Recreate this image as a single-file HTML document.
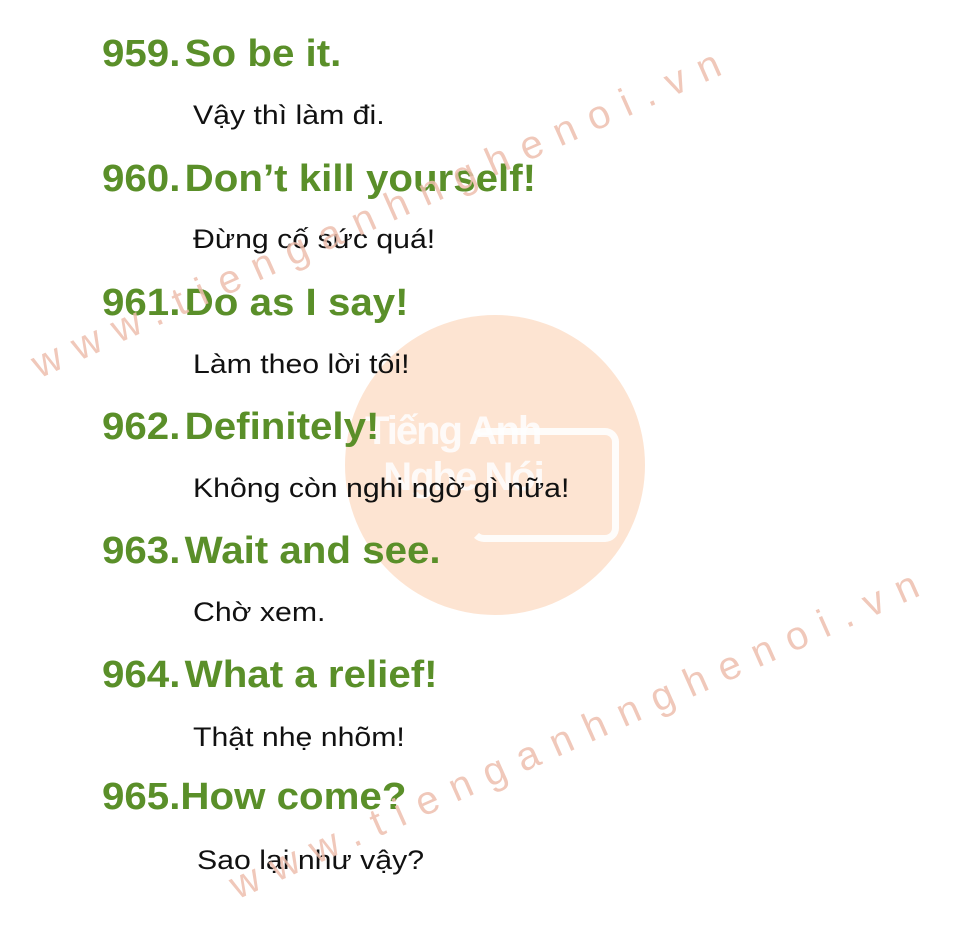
<!DOCTYPE html>
<html><head><meta charset="utf-8"><style>
html,body{margin:0;padding:0;background:#fff;width:960px;height:928px;overflow:hidden;position:relative;font-family:"Liberation Sans",Arial,sans-serif}
.c{position:absolute;left:345px;top:315px;width:300px;height:300px;border-radius:50%;background:#fde4d2}
.logo{position:absolute;left:365px;top:408px;color:#fff;font-weight:bold;font-size:40px;letter-spacing:-2px;opacity:.85;line-height:46px}
.bub{position:absolute;left:470px;top:428px;width:135px;height:100px;border:7px solid #fff;border-radius:14px;border-left-color:transparent;opacity:.9}
.h{position:absolute;left:102px;color:#5a8f29;font-weight:bold;font-size:38px;line-height:1;transform:scaleX(1.06);transform-origin:0 0;white-space:nowrap}
.h span{display:inline-block;width:78px}
.b{position:absolute;left:193px;color:#111;font-size:27px;line-height:1;transform:scaleX(1.12);transform-origin:0 0;white-space:nowrap}
.w{position:absolute;color:#eebfae;font-size:40px;letter-spacing:14.5px;white-space:nowrap;transform:rotate(-24deg);transform-origin:0 100%;line-height:1;opacity:.85}
</style></head><body>
<div class="c"></div>
<div class="bub"></div>
<div class="logo">Tiếng Anh<br>&nbsp;&nbsp;Nghe Nói</div>
<div class="h" style="top:35px"><span>959.</span>So be it.</div>
<div class="b" style="top:102px">Vậy thì làm đi.</div>
<div class="h" style="top:160px"><span>960.</span>Don’t kill yourself!</div>
<div class="b" style="top:226px">Đừng cố sức quá!</div>
<div class="h" style="top:284px"><span>961.</span>Do as I say!</div>
<div class="b" style="top:351px">Làm theo lời tôi!</div>
<div class="h" style="top:408px"><span>962.</span>Definitely!</div>
<div class="b" style="top:475px">Không còn nghi ngờ gì nữa!</div>
<div class="h" style="top:532px"><span>963.</span>Wait and see.</div>
<div class="b" style="top:599px">Chờ xem.</div>
<div class="h" style="top:656px"><span>964.</span>What a relief!</div>
<div class="b" style="top:724px">Thật nhẹ nhõm!</div>
<div class="h" style="top:778px">965.How come?</div>
<div class="b" style="top:847px;left:197px">Sao lại như vậy?</div>
<div class="w" style="left:42px;top:345px">www.tienganhnghenoi.vn</div>
<div class="w" style="left:240px;top:866px">www.tienganhnghenoi.vn</div>
</body></html>
